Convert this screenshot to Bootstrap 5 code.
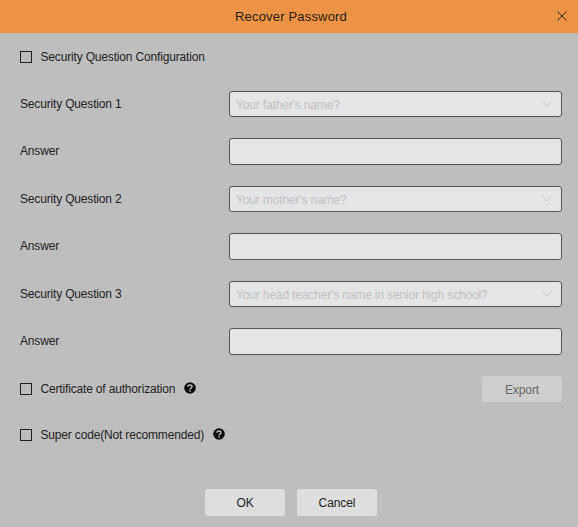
<!DOCTYPE html>
<html lang="en">
<head>
<meta charset="utf-8">
<title>Recover Password</title>
<link rel="stylesheet" href="https://cdn.jsdelivr.net/npm/bootstrap@5.3.0/dist/css/bootstrap.min.css">
<style>
html, body { height: 100%; }
body { margin: 0; background: #bebebe; font-family: "Liberation Sans", Arial, sans-serif; font-size: 12px; letter-spacing: -.17px; color: #222; overflow: hidden; }
.dlg { width: 578px; height: 527px; }
.dlg-head { height: 33px; background: #ec9345; color: #2b1d10; font-size: 13px; letter-spacing: .18px; padding-left: 4px; }
.dlg-close { right: 10px; top: 10px; width: 12px; height: 12px; display: block; }
.dlg-body { padding: 0 16px 0 20px; }
.line-cert { height: 48px; }
.line-super { height: 44px; }
.first-check { height: 47px; }
.pick { width: 12px; height: 12px; border: 1px solid #1e1e1e; flex: none; margin-right: 8.5px; }
.line-field { height: 47.5px; }
.lbl { width: 209px; flex: none; }
.fake-box { width: 333px; background: #e5e5e5; border: 1px solid #555; border-radius: 3px; padding: 0 6px; color: #c2c2c4; letter-spacing: -.15px; }
.fake-text { padding-top: 2px; }
.h-sel { height: 26px; }
.h-inp { height: 27px; }
.chev { width: 10px; height: 6px; margin-right: 3px; }
.hint { width: 12px; height: 12px; margin-left: 8.5px; margin-top: -2px; flex: none; }
.act { width: 80px; height: 27px; background: #dedede; border: 0; border-radius: 3px; font-size: 12px; letter-spacing: -.1px; padding: 0; color: #222; }
.act-off { height: 26px; padding-top: 1px; background: #cfcfcf; color: #666; margin-left: auto; margin-right: 0; }
.foot { gap: 12px; margin-top: 32px; }
</style>
</head>
<body>
<div class="dlg d-flex flex-column">
  <div class="dlg-head position-relative d-flex align-items-center justify-content-center">
    <span>Recover Password</span>
    <svg class="dlg-close position-absolute" viewBox="0 0 12 12" aria-label="Close"><path d="M1.5 1.5 L10.5 10.500 M10.5 1.5 L1.5 10.500" stroke="#3a2a18" stroke-width="1" fill="none"/></svg>
  </div>
  <div class="dlg-body d-flex flex-column">
    <div class="first-check d-flex align-items-center"><span class="pick"></span><span>Security Question Configuration</span></div>

    <div class="line-field d-flex align-items-center"><span class="lbl">Security Question 1</span>
      <div class="fake-box h-sel d-flex align-items-center justify-content-between"><span class="fake-text">Your father's name?</span><svg class="chev" viewBox="0 0 10 6"><path d="M.5.5 5 5 9.500.5" stroke="#c8c8ca" fill="none"/></svg></div></div>
    <div class="line-field d-flex align-items-center"><span class="lbl">Answer</span><div class="fake-box h-inp"></div></div>

    <div class="line-field d-flex align-items-center"><span class="lbl">Security Question 2</span>
      <div class="fake-box h-sel d-flex align-items-center justify-content-between"><span class="fake-text">Your mother's name?</span><svg class="chev" viewBox="0 0 10 6"><path d="M.5.5 5 5 9.500.5" stroke="#c8c8ca" fill="none"/></svg></div></div>
    <div class="line-field d-flex align-items-center"><span class="lbl">Answer</span><div class="fake-box h-inp"></div></div>

    <div class="line-field d-flex align-items-center"><span class="lbl">Security Question 3</span>
      <div class="fake-box h-sel d-flex align-items-center justify-content-between"><span class="fake-text">Your head teacher's name in senior high school?</span><svg class="chev" viewBox="0 0 10 6"><path d="M.5.5 5 5 9.500.5" stroke="#c8c8ca" fill="none"/></svg></div></div>
    <div class="line-field d-flex align-items-center"><span class="lbl">Answer</span><div class="fake-box h-inp"></div></div>

    <div class="line-cert d-flex align-items-center"><span class="pick"></span><span>Certificate of authorization</span>
      <svg class="hint" viewBox="0 0 12 12"><circle cx="6" cy="6" r="5.800" fill="#0c0c0c"/><path d="M4 4.700C4 3.500 4.900 3 6 3s2 .6 2 1.700c0 1.500-2 1.400-2 2.800" stroke="#bebebe" stroke-width="1.400" fill="none"/><rect x="5.300" y="8.300" width="1.400" height="1.400" fill="#bebebe"/></svg>
      <button type="button" class="btn act act-off">Export</button></div>
    <div class="line-super d-flex align-items-center"><span class="pick"></span><span>Super code(Not recommended)</span>
      <svg class="hint" viewBox="0 0 12 12"><circle cx="6" cy="6" r="5.800" fill="#0c0c0c"/><path d="M4 4.700C4 3.500 4.900 3 6 3s2 .6 2 1.700c0 1.500-2 1.400-2 2.800" stroke="#bebebe" stroke-width="1.400" fill="none"/><rect x="5.300" y="8.300" width="1.400" height="1.400" fill="#bebebe"/></svg></div>

    <div class="foot d-flex justify-content-center"><button type="button" class="btn act">OK</button><button type="button" class="btn act">Cancel</button></div>
  </div>
</div>
</body>
</html>
